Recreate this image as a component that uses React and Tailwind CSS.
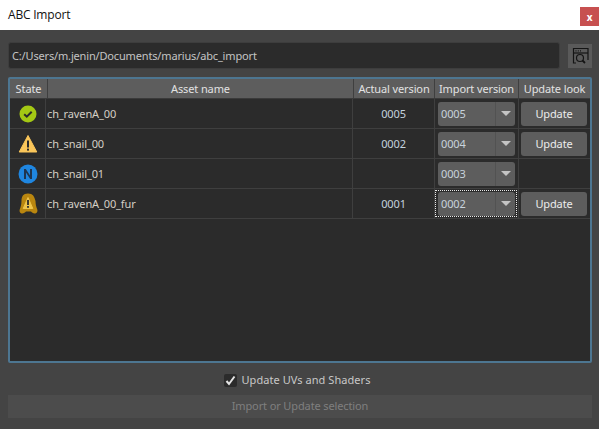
import React from 'react';

const rows = [
    { name: 'ch_ravenA_00', state: 'ok', actual: '0005', version: '0005', update: true },
    { name: 'ch_snail_00', state: 'warn', actual: '0002', version: '0004', update: true },
    { name: 'ch_snail_01', state: 'new', actual: '', version: '0003', update: false },
    { name: 'ch_ravenA_00_fur', state: 'fur', actual: '0001', version: '0002', update: true, focused: true },
];

const StateIcon = ({ state }) => {
    if (state === 'ok') {
        return (
            <svg width="20" height="20" viewBox="0 0 20 20">
                <circle cx="10" cy="10" r="8.5" fill="#a4c814" />
                <path d="M6.2 10.2l2.6 2.5 4.9-5" fill="none" stroke="#2b2b2b" strokeWidth="2" />
            </svg>
        );
    }
    if (state === 'warn') {
        return (
            <svg width="20" height="20" viewBox="0 0 20 20">
                <path d="M10 1.5L18.8 18H1.2z" fill="#fac65a" stroke="#fac65a" strokeLinejoin="round" />
                <path d="M10 6.5v7" stroke="#2b2b2b" strokeWidth="2" />
                <rect x="9" y="14.6" width="2" height="2" fill="#2b2b2b" />
            </svg>
        );
    }
    if (state === 'new') {
        return (
            <svg width="20" height="20" viewBox="0 0 20 20">
                <circle cx="10" cy="10" r="9.5" fill="#1f86e0" />
                <path d="M6 15V5h1.8l4.2 6.6V5h2v10h-1.8L8 8.4V15z" fill="#1f3550" />
            </svg>
        );
    }
    return (
        <svg width="20" height="22" viewBox="0 0 20 22">
            <path d="M10 .5C5 .5 3.6 3.5 3.5 8c-.1 3.500-.7 5.500-1.600 8-.9 2.300.1 4.500 2.400 4.500 1.800 0 2.700-1.200 3.700-2h5c1 .8 1.900 2 3.700 2 2.300 0 3.300-2.200 2.400-4.500-.9-2.500-1.500-4.500-1.600-8C16.400 3.500 15 .5 10 .5z" fill="#b9860f" />
            <path d="M10 4.500L14.800 15.500H5.200z" fill="#efc44a" stroke="#efc44a" strokeLinejoin="round" />
            <path d="M10 7v5" stroke="#2b2b2b" strokeWidth="1.8" />
            <rect x="9.1" y="13" width="1.8" height="1.8" fill="#2b2b2b" />
        </svg>
    );
};

const VersionSelect = ({ value }) => (
    <div className="flex h-6 w-[77px] items-center rounded-[3px] bg-[#5d5d5d]">
        <span className="flex-1 pt-px pl-[3px] text-[#c8d3dc]">{value}</span>
        <div className="flex h-full w-5 items-center justify-center border-l border-[#525252]">
            <svg width="10" height="5" viewBox="0 0 10 5">
                <path d="M0 0h10L5 5z" fill="#c4c4c4" />
            </svg>
        </div>
    </div>
);

const Row = ({ row }) => (
    <div className="flex h-[30px] border-b border-[#3f3f3f]">
        <div className="flex w-9 shrink-0 items-center justify-center border-r border-[#3f3f3f]">
            <StateIcon state={row.state} />
        </div>
        <div className="flex flex-1 items-center pt-px pl-[1px] text-[#d4cfc6]">{row.name}</div>
        <div className="flex w-[82px] shrink-0 items-center justify-center border-l border-[#3f3f3f] pt-px text-[#c4d2de]">{row.actual}</div>
        <div className={'flex w-[84px] shrink-0 items-center justify-center border-l border-[#3f3f3f] ' + (row.focused ? 'outline-1 -outline-offset-2 outline-dotted outline-[#e8e8e8]' : '')}>
            <VersionSelect value={row.version} />
        </div>
        <div className="flex w-[72px] shrink-0 items-center border-l border-[#3f3f3f] pl-[2px]">
            {row.update && (
                <div className="flex h-6 w-[66px] items-center justify-center rounded-[3px] bg-[#5d5d5d] pt-px text-[#ececec]">Update</div>
            )}
        </div>
    </div>
);

const App = () => {
    return (
        <div className="flex h-[429px] w-[599px] flex-col overflow-hidden bg-[#444444] font-['Noto_Sans',sans-serif] text-[11px] tracking-[-0.12px]">
            {/* title bar */}
            <div className="flex h-[30px] shrink-0 items-start justify-between bg-white pl-2">
                <span className="mt-[7px] font-['Open_Sans',sans-serif] text-[12px] leading-4 tracking-[-0.2px] text-[#111]">ABC Import</span>
                <div className="mt-[7px] flex h-[19px] w-[19px] items-center justify-center bg-[#c75050] text-[10px] leading-none font-bold text-white">x</div>
            </div>

            <div className="flex flex-1 flex-col pt-3 pr-[7px] pl-2">
                {/* path */}
                <div className="flex items-center gap-2">
                    <div className="flex h-[27px] flex-1 items-center rounded-[3px] border border-[#3d3d3d] bg-[#2b2b2b] pt-[2px] pl-[3px] tracking-[-0.16px] text-[#c4c4c4]">
                        C:/Users/m.jenin/Documents/marius/abc_import
                    </div>
                    <div className="flex h-6 w-6 items-center justify-center bg-[#5a5a5a]">
                        <svg width="24" height="24" viewBox="0 0 24 24" fill="none" stroke="#141414" strokeWidth="1.2">
                            <path d="M8 19H5.500V4.500h14.500V16" />
                            <path d="M5.500 9h14.500" />
                            <path d="M7.500 6.800h1M9.800 6.800h1M12 6.800h1" />
                            <circle cx="12" cy="14" r="3.5" />
                            <path d="M14.500 16.500l2.500 2.500" strokeWidth="1.8" />
                        </svg>
                    </div>
                </div>

                {/* table */}
                <div className="mt-2 flex h-[286px] flex-col rounded-[2px] border-2 border-[#4d7691] bg-[#2b2b2b]">
                    <div className="flex h-5 shrink-0 border-b border-[#3a3a3a] bg-[#5d5d5d] text-center leading-[19px] text-[#e2e2e2]">
                        <div className="w-[37px] shrink-0">State</div>
                        <div className="flex-1 border-l border-[#3f3f3f]">Asset name</div>
                        <div className="w-[81px] shrink-0 border-l border-[#3f3f3f]">Actual version</div>
                        <div className="w-[84px] shrink-0 border-l border-[#3f3f3f]">Import version</div>
                        <div className="w-[72px] shrink-0 border-l border-[#3f3f3f]">Update look</div>
                    </div>
                    {rows.map((row) => (
                        <Row key={row.name} row={row} />
                    ))}
                </div>

                {/* checkbox */}
                <div className="mt-[10px] flex h-[14px] items-center justify-center pr-[6px]">
                    <div className="mr-[5px] flex h-[13px] w-[13px] items-center justify-center rounded-[2px] bg-[#2b2b2b]">
                        <svg width="11" height="11" viewBox="0 0 11 11">
                            <path d="M1.500 6l2.500 3 5.500-7.500" fill="none" stroke="#e4e4e4" strokeWidth="2" />
                        </svg>
                    </div>
                    <span className="tracking-[0.05px] text-[#c8c8c8]">Update UVs and Shaders</span>
                </div>

                <div className="mt-2 flex h-[23px] items-center justify-center bg-[#4c4c4c] text-[#7f7f7f]">Import or Update selection</div>
            </div>
        </div>
    );
};

export default App;
